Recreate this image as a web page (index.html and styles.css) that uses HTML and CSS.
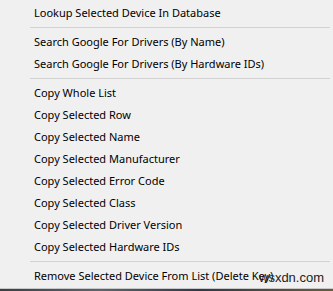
FILE: index.html
```html
<!DOCTYPE html>
<html>
<head>
<meta charset="utf-8">
<link rel="stylesheet" href="styles.css">
</head>
<body>
<div class="menu">
  <div class="item">Lookup Selected Device In Database</div>
  <div class="sep"></div>
  <div class="item">Search Google For Drivers (By Name)</div>
  <div class="item">Search Google For Drivers (By Hardware IDs)</div>
  <div class="sep"></div>
  <div class="item">Copy Whole List</div>
  <div class="item">Copy Selected Row</div>
  <div class="item">Copy Selected Name</div>
  <div class="item">Copy Selected Manufacturer</div>
  <div class="item">Copy Selected Error Code</div>
  <div class="item">Copy Selected Class</div>
  <div class="item">Copy Selected Driver Version</div>
  <div class="item">Copy Selected Hardware IDs</div>
  <div class="sep"></div>
  <div class="item">Remove Selected Device From List (Delete Key)</div>
</div>
<div class="below"></div>
<div class="watermark">wsxdn.com</div>
</body>
</html>
```
FILE: styles.css
```css
html, body {
  margin: 0;
  padding: 0;
  background: #f0f0f0;
  width: 333px;
  height: 291px;
  overflow: hidden;
  position: relative;
}
.menu {
  background: #f0f0f0;
  padding: 2px 0 1px 0;
  border-bottom: 1px solid #c8c8c8;
  font-family: "Noto Sans", "Open Sans", sans-serif;
  font-size: 11px;
  color: #000;
}
.item {
  height: 22px;
  line-height: 22px;
  padding-left: 34px;
  white-space: nowrap;
}
.sep {
  height: 7px;
  margin-left: 30px;
  margin-right: 3px;
  position: relative;
}
.sep::after {
  content: "";
  display: block;
  position: absolute;
  left: 0;
  right: 0;
  top: 3px;
  height: 1px;
  background: #d2d2d2;
}
.below {
  height: 3px;
  background: linear-gradient(90deg, #3a3f46 0%, #5a6470 30%, #2e3a4a 60%, #6b5a3a 100%);
}
.watermark {
  position: absolute;
  left: 259px;
  top: 270px;
  font-family: "Liberation Sans", sans-serif;
  font-size: 13px;
  color: #222;
}
```
